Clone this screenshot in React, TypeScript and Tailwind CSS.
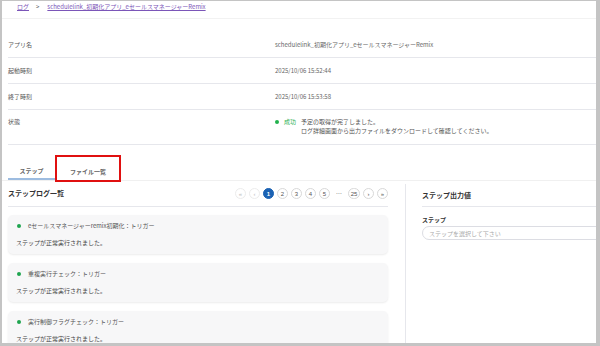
import React from "react";

const rows = [
  { label: "アプリ名", value: "schedulelink_初期化アプリ_eセールスマネージャーRemix" },
  { label: "起動時刻", value: "2025/10/06 15:52:44" },
  { label: "終了時刻", value: "2025/10/06 15:53:58" },
];

const cards = [
  "eセールスマネージャーremix初期化：トリガー",
  "重複実行チェック：トリガー",
  "実行制御フラグチェック：トリガー",
];

function PageBtn({ children, active, disabled, wide }: { children: React.ReactNode; active?: boolean; disabled?: boolean; wide?: boolean }) {
  return (
    <div
      className={
        "flex h-[11px] items-center justify-center rounded-full border font-['Liberation_Sans',sans-serif] text-[6px] leading-none " +
        (wide ? "w-[12px] " : "w-[11px] ") +
        (active
          ? "border-[#1b62b3] bg-[#1b62b3] font-bold text-white"
          : disabled
          ? "border-[#ececec] text-[#bbbbbb]"
          : "border-[#d8d8d8] text-[#555555]")
      }
    >
      {children}
    </div>
  );
}

export default function App() {
  return (
    <div className="h-[346px] w-[600px] overflow-hidden border-b-[3px] border-l-2 border-r-4 border-t border-[#c4c4c4] bg-white font-['Noto_Sans_CJK_JP','Noto_Sans',sans-serif] text-[#555555]">
      {/* breadcrumb */}
      <div className="flex h-[18px] items-start border-b border-[#f2f2f2] pl-[15px] pt-[2px] text-[6px] leading-[8px]">
        <span className="text-[#7b55b8] underline">ログ</span>
        <span className="ml-[7px] mr-[8px] text-[#444444]">&gt;</span>
        <span className="text-[#7b55b8] underline">schedulelink_初期化アプリ_eセールスマネージャーRemix</span>
      </div>

      {/* info table */}
      <div className="ml-[6px] mt-[13px] text-[6px] leading-[9px]">
        {rows.map((r) => (
          <div key={r.label} className="flex h-[26px] items-center border-b border-[#e6e7ec]">
            <div className="w-[267px] text-[#555555]">{r.label}</div>
            <div className="text-[#666666]">{r.value}</div>
          </div>
        ))}
        <div className="flex h-[35px] items-start border-b border-[#e6e7ec] pt-[7px]">
          <div className="w-[267px] text-[#555555]">状態</div>
          <div className="flex items-start">
            <div className="mt-[3px] h-[4px] w-[4px] rounded-full bg-[#22b14c]"></div>
            <div className="ml-[5px] text-[#2db055]">成功</div>
            <div className="ml-[5px] text-[#555555]">
              <div>予定の取得が完了しました。</div>
              <div>ログ詳細画面から出力ファイルをダウンロードして確認してください。</div>
            </div>
          </div>
        </div>
      </div>

      {/* tabs */}
      <div className="mt-[18px] flex border-b border-[#f0f0f0] pl-[6px] text-[6px] font-semibold leading-none text-[#666666]">
        <div className="flex h-[17px] w-[47px] items-center justify-center border-b-2 border-[#9dbce0]">ステップ</div>
        <div className="relative flex h-[17px] w-[66px] items-center justify-center">
          ファイル一覧
          <div className="absolute -bottom-[2px] -top-[8px] left-0 right-0 border-2 border-[#e01010]"></div>
        </div>
      </div>

      {/* split */}
      <div className="flex">
        <div className="w-[403px] pl-[6px] pr-[17px]">
          <div className="flex h-[26px] items-center justify-between border-b border-[#e6e7ec]">
            <div className="text-[7px] font-bold text-[#333333]">ステップログ一覧</div>
            <div className="flex items-center gap-[3px]">
              <PageBtn disabled>«</PageBtn>
              <PageBtn disabled>‹</PageBtn>
              <PageBtn active>1</PageBtn>
              <PageBtn>2</PageBtn>
              <PageBtn>3</PageBtn>
              <PageBtn>4</PageBtn>
              <PageBtn>5</PageBtn>
              <div className="flex w-[12px] justify-center text-[6px] text-[#555555]">…</div>
              <PageBtn wide>25</PageBtn>
              <PageBtn>›</PageBtn>
              <PageBtn>»</PageBtn>
            </div>
          </div>
          <div className="mt-[8px] flex flex-col gap-[9px]">
            {cards.map((c) => (
              <div key={c} className="rounded-[5px] bg-[#f7f7f8] px-[8px] pb-[7px] pt-[7px] text-[6px] leading-[8px] shadow-[0_1px_2px_rgba(0,0,0,0.08)]">
                <div className="flex h-[8px] items-center">
                  <div className="ml-[1px] h-[4px] w-[4px] rounded-full bg-[#1fa550]"></div>
                  <div className="ml-[7px] text-[#555555]">{c}</div>
                </div>
                <div className="mt-[9px] text-[#444444]">ステップが正常実行されました。</div>
              </div>
            ))}
          </div>
        </div>
        <div className="mt-[3px] flex-1 overflow-hidden border-l border-[#e6e7ec] pl-[16px]">
          <div className="flex h-[23px] items-center border-b border-[#e6e7ec]">
            <div className="text-[7px] font-bold text-[#333333]">ステップ出力値</div>
          </div>
          <div className="mt-[9px] text-[6px] font-bold leading-[8px] text-[#333333]">ステップ</div>
          <div className="mt-[2px] flex h-[14px] w-[220px] items-center rounded-full border border-[#dcdde3] pl-[6px] text-[6px] text-[#aaaaaa]">
            ステップを選択して下さい
          </div>
        </div>
      </div>
    </div>
  );
}
